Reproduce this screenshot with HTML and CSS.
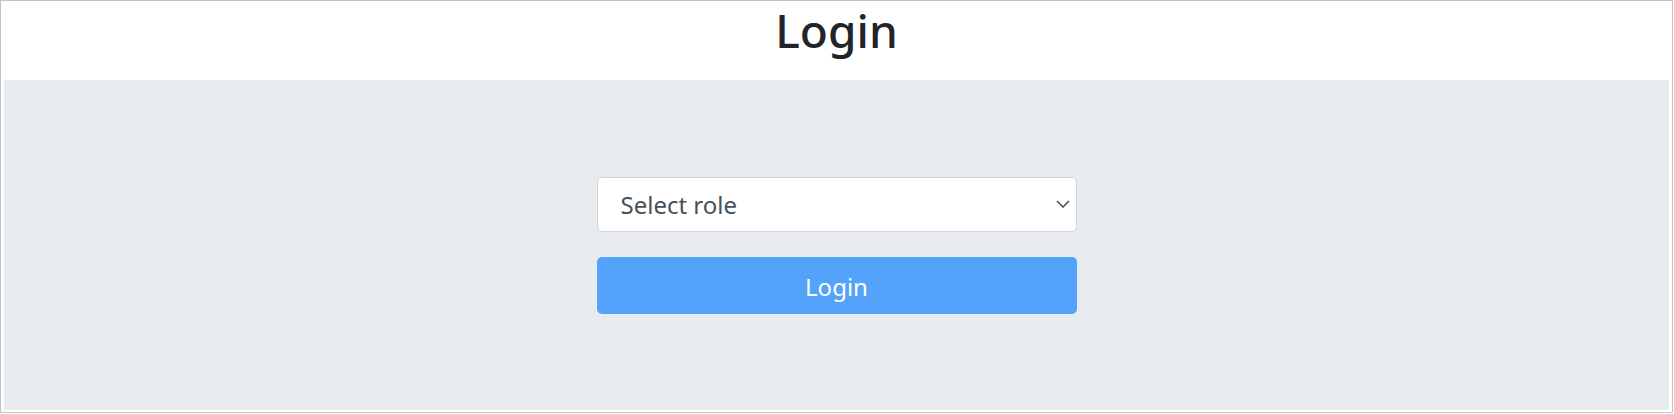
FILE: index.html
```html
<!DOCTYPE html>
<html lang="en">
<head>
<meta charset="utf-8">
<title>Login</title>
<link rel="stylesheet" href="styles.css">
</head>
<body>
<div class="frame">
  <header class="header">
    <h1 class="title">Login</h1>
  </header>
  <main class="jumbotron">
    <form class="login-form">
      <div class="select-wrap">
        <select class="role-select">
          <option>Select role</option>
        </select>
        <svg class="chevron" width="14" height="8" viewBox="0 0 14 8" aria-hidden="true">
          <path d="M1 1 L7 7 L13 1" fill="none" stroke="#495057" stroke-width="1.6"/>
        </svg>
      </div>
      <button type="button" class="login-btn">Login</button>
    </form>
  </main>
</div>
</body>
</html>
```

FILE: styles.css
```css
html, body {
  margin: 0;
  padding: 0;
  background: #ffffff;
}

body {
  font-family: "Noto Sans", "Open Sans", Arial, sans-serif;
  color: #212529;
}

.frame {
  box-sizing: border-box;
  width: 1673px;
  height: 413px;
  border: 1px solid #c4c4c4;
  padding: 0 3px 2px 3px;
  display: flex;
  flex-direction: column;
}

.header {
  height: 79px;
  flex: none;
  display: flex;
  justify-content: center;
  align-items: flex-start;
  padding-top: 1px;
  box-sizing: border-box;
}

.title {
  margin: 0;
  font-size: 46px;
  font-weight: 500;
  line-height: 56px;
  color: #212529;
}

.jumbotron {
  flex: 1;
  background: #e9ecef;
  display: flex;
  align-items: center;
  justify-content: center;
}

.login-form {
  width: 480px;
  display: flex;
  flex-direction: column;
  gap: 25px;
}

.select-wrap {
  position: relative;
}

.role-select {
  box-sizing: border-box;
  width: 100%;
  height: 55px;
  border: 1px solid #ced4da;
  border-radius: 5px;
  background: #ffffff;
  padding: 0 0 0 23px;
  font-family: "Noto Sans", "Open Sans", Arial, sans-serif;
  font-size: 24px;
  color: #495057;
  appearance: none;
  -webkit-appearance: none;
  outline: none;
}

.chevron {
  position: absolute;
  right: 7px;
  top: 23px;
  pointer-events: none;
}

.login-btn {
  box-sizing: border-box;
  width: 100%;
  height: 57px;
  border: none;
  border-radius: 5px;
  background: #52a3f9;
  color: #ffffff;
  font-family: "Noto Sans", "Open Sans", Arial, sans-serif;
  font-size: 24px;
  line-height: 55px;
  padding: 2px 0 0 0;
}
```
